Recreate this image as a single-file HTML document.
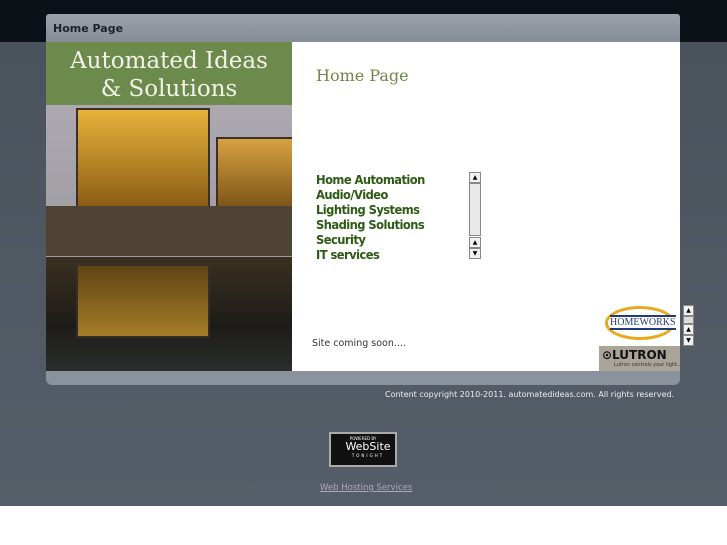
<!DOCTYPE html>
<html><head><meta charset="utf-8"><style>
body{margin:0;width:727px;height:545px;background:#fff;font-family:"DejaVu Sans","Liberation Sans",sans-serif;position:relative;overflow:hidden}
.top{position:absolute;left:0;top:0;width:727px;height:42px;background:#0c1117}
.mid{position:absolute;left:0;top:42px;width:727px;height:464px;background:linear-gradient(#4a525c,#565e69)}
.hdr{position:absolute;left:46px;top:14px;width:634px;height:28px;background:linear-gradient(#9aa1aa,#858d97);border-radius:3px 3px 0 0}
.hdr span{position:absolute;left:7px;top:8px;font-size:11px;font-weight:bold;color:#1c232b}
.main{position:absolute;left:46px;top:42px;width:634px;height:329px;background:#fff}
.ftr{position:absolute;left:46px;top:371px;width:634px;height:14px;background:#8a929c;border-radius:0 0 6px 6px}
.pic{position:absolute;left:46px;top:42px;width:246px;height:329px;overflow:hidden;background:#b7b3b8}
.green{position:absolute;left:0;top:0;width:246px;height:63px;background:#6d8a4d;color:#f2f2e8;font-family:"DejaVu Serif","Liberation Serif",serif;font-size:23px;text-align:center;line-height:28px;padding-top:5px;box-sizing:border-box}
.water{position:absolute;left:0;top:215px;width:246px;height:114px;background:linear-gradient(#3a3020,#1e1c18 60%,#2a2d2c)}
.bld{position:absolute;background:linear-gradient(#e6b23a,#8a5c15);border:2px solid #3b3026}
.ttl{position:absolute;left:316px;top:66px;font-family:"DejaVu Serif","Liberation Serif",serif;font-size:16px;color:#6f8647}
.menu{position:absolute;left:316px;top:172px;font-size:12.5px;font-weight:bold;color:#2d5a14;line-height:15px;letter-spacing:-0.6px;transform:scaleX(0.92);transform-origin:left}
.sb{position:absolute;background:#f1f1f1;border:1px solid #888;box-sizing:border-box;font-size:6px;text-align:center;line-height:9px;color:#000}
.soon{position:absolute;left:312px;top:338px;font-size:9.5px;color:#333}
.copy{position:absolute;left:385px;top:390px;font-size:8px;color:#eee;white-space:nowrap}
.badge{position:absolute;left:329px;top:432px;width:68px;height:35px;background:#111;border:2px solid #aaa;box-sizing:border-box;color:#fff;text-align:center}
.link{position:absolute;left:320px;top:483px;font-size:8.5px;color:#aab;text-decoration:underline}
</style></head><body>
<div class="top"></div><div class="mid"></div>
<div class="hdr"><span>Home Page</span></div>
<div class="main"></div>
<div class="ftr"></div>
<div class="pic">
 <div style="position:absolute;left:0;top:63px;width:246px;height:152px;background:linear-gradient(#aea9b0,#9b9aa0)"></div>
 <div class="bld" style="left:30px;top:66px;width:130px;height:98px"></div>
 <div class="bld" style="left:170px;top:95px;width:76px;height:70px;background:linear-gradient(#d7a243,#7a5215)"></div>
 <div style="position:absolute;left:0;top:164px;width:246px;height:50px;background:#4d4233"></div>
 <div class="water"></div>
 <div class="bld" style="left:30px;top:222px;width:130px;height:70px;background:linear-gradient(#6b4a12,#c8962c);opacity:.8"></div>
 <div class="green">Automated Ideas<br>&amp; Solutions</div>
</div>
<div class="ttl">Home Page</div>
<div class="menu">Home Automation<br>Audio/Video<br>Lighting Systems<br>Shading Solutions<br>Security<br>IT services</div>
<div class="sb" style="left:469px;top:172px;width:12px;height:11px">▲</div>
<div class="sb" style="left:469px;top:183px;width:12px;height:53px;background:#e8e8e8"></div>
<div class="sb" style="left:469px;top:237px;width:12px;height:11px">▲</div>
<div class="sb" style="left:469px;top:248px;width:12px;height:11px">▼</div>
<div class="soon">Site coming soon....</div>
<div style="position:absolute;left:603px;top:304px;width:74px;height:40px">
 <div style="position:absolute;left:2px;top:2px;width:70px;height:34px;border:3px solid #e8a820;border-radius:50%;box-sizing:border-box"></div>
 <div style="position:absolute;left:7px;top:11px;font-family:'Liberation Serif',serif;font-size:10px;color:#223a7a;background:#fff;border-top:2px solid #223a7a;border-bottom:2px solid #223a7a;line-height:11px;width:66px;white-space:nowrap;overflow:hidden">HOMEWORKS</div>
</div>
<div style="position:absolute;left:599px;top:346px;width:81px;height:25px;background:#aaa49a">
 <div style="position:absolute;left:3px;top:2px;font-size:12px;font-weight:bold;color:#111">⊙LUTRON</div>
 <div style="position:absolute;left:15px;top:16px;font-size:5px;color:#333;white-space:nowrap">Lutron controls your light...</div>
</div>
<div class="sb" style="left:683px;top:305px;width:11px;height:11px">▲</div>
<div class="sb" style="left:683px;top:316px;width:11px;height:8px;background:#ddd"></div>
<div class="sb" style="left:683px;top:324px;width:11px;height:11px">▲</div>
<div class="sb" style="left:683px;top:335px;width:11px;height:11px">▼</div>
<div class="copy">Content copyright 2010-2011. automatedideas.com. All rights reserved.</div>
<div class="badge"><div style="font-size:4px;margin-top:2px">POWERED BY</div><div style="font-size:11px;margin-left:10px;line-height:12px">WebSite</div><div style="font-size:4px;margin-left:10px;letter-spacing:2px">TONIGHT</div></div>
<div class="link">Web Hosting Services</div>
</body></html>
